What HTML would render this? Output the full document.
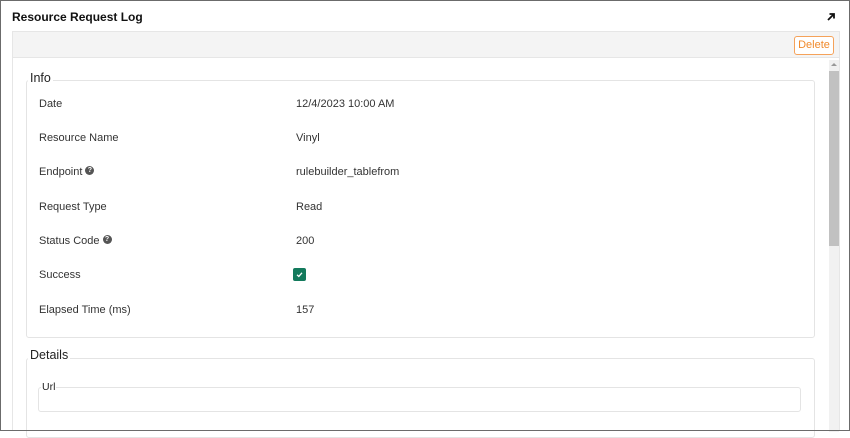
<!DOCTYPE html>
<html><head><meta charset="utf-8"><style>
*{box-sizing:border-box;margin:0;padding:0}
body{width:850px;height:431px;overflow:hidden;background:#fff;font-family:"Liberation Sans",sans-serif;color:#333;position:relative}
.frame{position:absolute;left:0;top:0;width:850px;height:431px;border:1px solid #6b6b6b;z-index:5;pointer-events:none}
.title{position:absolute;left:12px;top:10px;font-size:12px;font-weight:bold;color:#111}
.exp{position:absolute;left:826px;top:12px}
.panel{position:absolute;left:12px;top:31px;width:828px;height:400px;border:1px solid #e6e6e6;border-bottom:none}
.bar{position:absolute;left:0;top:0;width:826px;height:26px;background:#f4f4f4;border-bottom:1px solid #e6e6e6}
.del{position:absolute;left:781px;top:4px;width:40px;height:19px;border:1px solid #f5a25a;border-radius:3px;color:#f08a2c;font-size:11px;text-align:center;line-height:17px;background:#fff}
.sb{position:absolute;left:816px;top:28px;width:10px;height:372px;background:#f1f1f1}
.thumb{position:absolute;left:0;top:11px;width:10px;height:175px;background:#c1c1c1}
.fs{position:absolute;border:1px solid #e4e4e4;border-radius:3px}
.lg{position:absolute;background:#fff;font-size:12.5px;color:#222;padding:0 2px}
.row{position:absolute;font-size:11px;color:#333}
.q{display:inline-block;width:9px;height:9px;border-radius:50%;background:#555;color:#fff;font-size:7px;font-weight:bold;text-align:center;line-height:9px;vertical-align:3px;margin-left:3px}
.chk{position:absolute;left:293px;top:268px;width:13px;height:13px;background:#137a5c;border-radius:2px}
</style></head><body>
<div class="frame"></div>
<div class="title">Resource Request Log</div>
<svg class="exp" width="10" height="10" viewBox="0 0 10 10"><path d="M2 8L8 2M3.5 2H8V6.5" stroke="#111" stroke-width="1.8" fill="none"/></svg>
<div class="panel">
<div class="bar"><div class="del">Delete</div></div>
<div class="sb"><div style="position:absolute;left:2px;top:3px;border:3px solid transparent;border-bottom:3px solid #999;border-top:none"></div><div class="thumb"></div></div>
</div>
<div class="fs" style="left:26px;top:80px;width:789px;height:258px"></div>
<div class="lg" style="left:28px;top:71px">Info</div>
<div class="row" style="left:39px;top:98px">Date</div><div class="row" style="left:296px;top:98px">12/4/2023 10:00 AM</div>
<div class="row" style="left:39px;top:132px">Resource Name</div><div class="row" style="left:296px;top:132px">Vinyl</div>
<div class="row" style="left:39px;top:166px">Endpoint<span class="q">?</span></div><div class="row" style="left:296px;top:166px">rulebuilder_tablefrom</div>
<div class="row" style="left:39px;top:201px">Request Type</div><div class="row" style="left:296px;top:201px">Read</div>
<div class="row" style="left:39px;top:235px">Status Code<span class="q">?</span></div><div class="row" style="left:296px;top:235px">200</div>
<div class="row" style="left:39px;top:269px">Success</div>
<div class="chk"><svg width="13" height="13" viewBox="0 0 13 13"><path d="M4 6.8L5.8 8.4L9 4.8" stroke="#fff" stroke-width="1.3" fill="none"/></svg></div>
<div class="row" style="left:39px;top:304px">Elapsed Time (ms)</div><div class="row" style="left:296px;top:304px">157</div>
<div class="fs" style="left:26px;top:358px;width:789px;height:80px"></div>
<div class="lg" style="left:28px;top:348px">Details</div>
<div class="fs" style="left:38px;top:387px;width:763px;height:25px"></div>
<div class="lg" style="left:41px;top:381px;font-size:10.5px;padding:0 1px">Url</div>
</body></html>
